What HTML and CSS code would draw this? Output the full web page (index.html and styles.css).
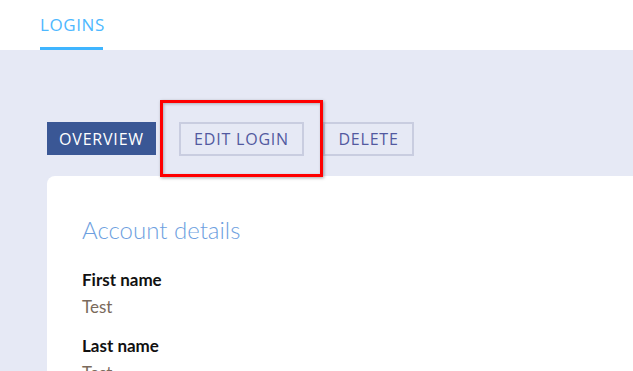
FILE: index.html
```html
<!DOCTYPE html>
<html>
<head>
<meta charset="utf-8">
<link rel="stylesheet" href="styles.css">
</head>
<body>
<header class="topbar">
  <a class="tab active">LOGINS</a>
</header>
<main class="main">
  <div class="actions">
    <button class="btn btn-primary">OVERVIEW</button>
    <span class="highlight-wrap">
      <button class="btn btn-outline">EDIT LOGIN</button>
      <span class="highlight"></span>
    </span>
    <button class="btn btn-outline">DELETE</button>
  </div>
  <section class="card">
    <h2 class="card-title">Account details</h2>
    <div class="field">
      <div class="label">First name</div>
      <div class="value">Test</div>
    </div>
    <div class="field">
      <div class="label">Last name</div>
      <div class="value">Test</div>
    </div>
  </section>
</main>
</body>
</html>
```
FILE: styles.css
```css
html, body {
  margin: 0;
  padding: 0;
  height: 100%;
  overflow: hidden;
}
body {
  font-family: Lato, "Open Sans", sans-serif;
  background: #e6e9f5;
}
.topbar {
  background: #fff;
  height: 50px;
  padding-left: 40px;
  display: flex;
  align-items: flex-end;
}
.tab {
  font-family: "Open Sans", Lato, sans-serif;
  font-size: 17px;
  color: #4db8ff;
  letter-spacing: 0.6px;
  padding-bottom: 10px;
  border-bottom: 3px solid #3fb5ff;
  line-height: 24px;
  width: 63px;
  text-align: left;
  white-space: nowrap;
}
.main {
  padding: 72px 0 0 47px;
}
.actions {
  display: flex;
  align-items: center;
  height: 34px;
}
.btn {
  font-family: "Open Sans", Lato, sans-serif;
  font-size: 16px;
  letter-spacing: 0.8px;
  height: 34px;
  box-sizing: border-box;
  padding: 0;
  text-align: center;
  cursor: pointer;
}
.btn-primary {
  background: #3a5795;
  color: #fff;
  border: none;
  width: 109px;
  height: 33px;
  margin-top: -1px;
}
.btn-outline {
  background: transparent;
  border: 2px solid #c9cde0;
  color: #5259a0;
}
.highlight-wrap {
  position: relative;
  margin-left: 23px;
  margin-right: 19px;
}
.highlight-wrap .btn {
  width: 125px;
}
.actions > .btn-outline:last-child {
  width: 91px;
}
.highlight {
  position: absolute;
  left: -19px;
  top: -22px;
  width: 163px;
  height: 77px;
  box-sizing: border-box;
  border: 3px solid #ff0000;
  box-shadow: 1px 1px 3px rgba(0,0,0,0.35), inset 1px 1px 3px rgba(0,0,0,0.25);
  pointer-events: none;
}
.card {
  background: #fff;
  border-radius: 8px 0 0 0;
  margin-top: 20px;
  padding: 38px 35px 0;
  min-height: 300px;
}
.card-title {
  font-family: Lato, sans-serif;
  font-weight: 300;
  font-size: 24px;
  color: #6e9fe0;
  margin: 0 0 24px;
  line-height: 32px;
}
.field {
  margin-bottom: 18px;
}
.label {
  font-weight: 700;
  font-size: 17px;
  color: #111;
  line-height: 20px;
  margin-bottom: 6px;
}
.value {
  font-size: 17px;
  color: #7a6a5c;
  line-height: 22px;
}
```
